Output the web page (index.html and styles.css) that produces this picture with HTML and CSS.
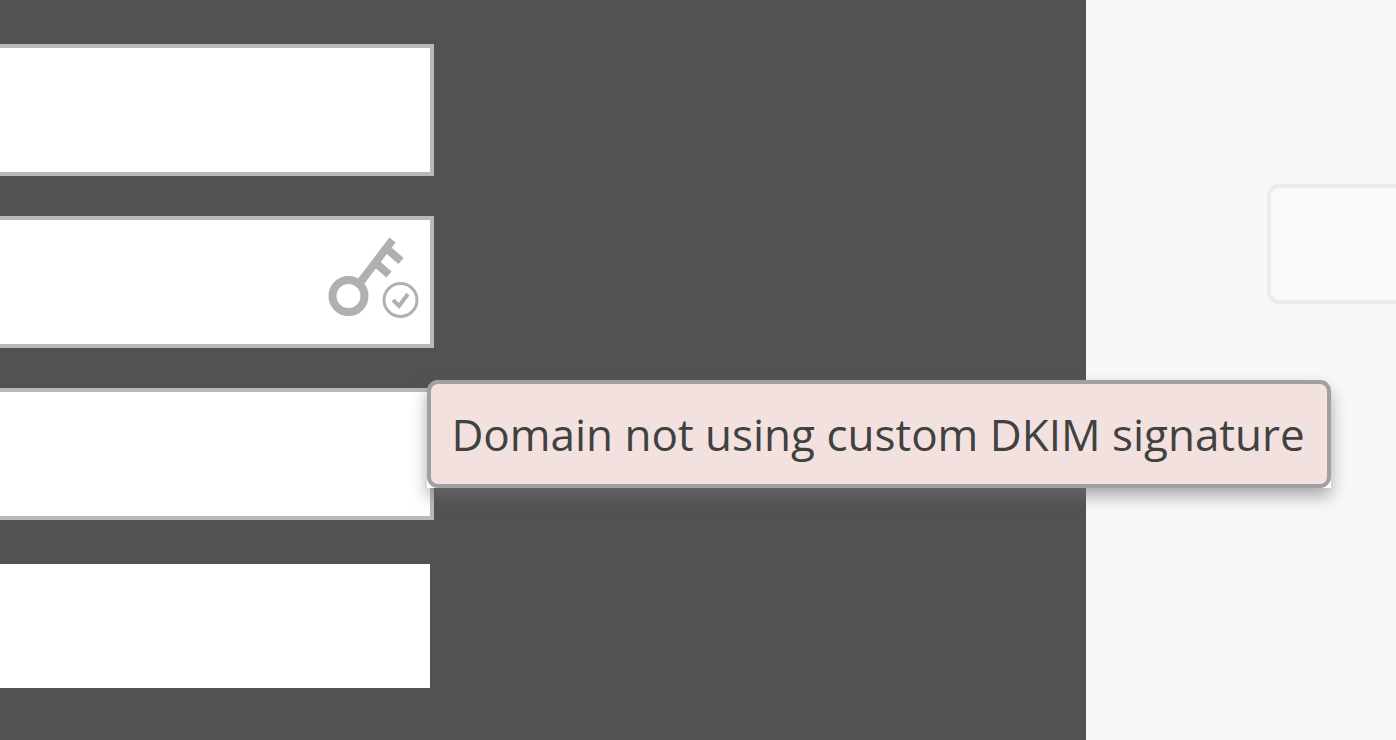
FILE: index.html
```html
<!DOCTYPE html>
<html lang="en">
<head>
<meta charset="utf-8">
<title>Domain settings</title>
<link rel="stylesheet" href="styles.css">
</head>
<body>
<div class="page">
  <main class="panel">
    <form class="fields">
      <input class="field" type="text" aria-label="Domain name">
      <div class="field-group">
        <input class="field" type="text" aria-label="DKIM signature" aria-describedby="dkim-tip">
        <svg class="key-icon" viewBox="0 0 92 84" aria-hidden="true">
          <g fill="none" stroke="#b0b0b0">
            <circle cx="21.500" cy="60" r="16" stroke-width="8"/>
            <path d="M32 48 65.500 4M59 12l15 13M47 25.500l15 13" stroke-width="8"/>
            <circle cx="73.500" cy="64" r="16.500" stroke-width="3"/>
            <path d="M66 64l6 6 9-12" stroke-width="4"/>
          </g>
        </svg>
      </div>
      <div class="field-group">
        <input class="field" type="text" aria-label="Return path">
        <div class="tooltip" id="dkim-tip" role="tooltip">
          <div class="tooltip-body">Domain not using custom DKIM signature</div>
        </div>
      </div>
      <input class="field field-plain" type="text" aria-label="Tracking domain">
    </form>
  </main>
  <aside class="side">
    <button class="side-button" type="button" aria-label="Options"></button>
  </aside>
</div>
</body>
</html>
```
FILE: styles.css
```css
* {
  box-sizing: border-box;
}

body {
  margin: 0;
  background: #f8f8f8;
  font-family: "Open Sans", "Noto Sans", sans-serif;
  overflow: hidden;
}

.page {
  display: flex;
  min-height: 100vh;
}

.panel {
  flex: 1;
  padding: 44px 0;
  background: #525252;
}

.fields {
  display: flex;
  flex-direction: column;
  gap: 40px;
  width: 40%;
}

.field-group {
  position: relative;
}

.field {
  display: block;
  width: 100%;
  height: 132px;
  padding: 0 120px 0 24px;
  border: 4px solid #b9b9b9;
  border-left: 0;
  border-radius: 0;
  background: #fff;
  font: inherit;
  font-size: 44px;
  color: #444;
}

.field-plain {
  border-color: #525252;
}

.key-icon {
  position: absolute;
  top: 20px;
  right: 15px;
  width: 92px;
  height: 84px;
}

.tooltip {
  position: absolute;
  z-index: 1;
  top: -8px;
  left: calc(100% - 7px);
  border-radius: 12px 12px 0 0;
  background: #fff;
  box-shadow: 0 8px 16px rgba(115, 115, 115, 0.6);
}

.tooltip-body {
  padding: 20px 22px 20px 20px;
  border: 4px solid #9fa09f;
  border-radius: 11px;
  background: #f3e1df;
  color: #404240;
  font-size: 44px;
  line-height: 60px;
  white-space: nowrap;
}

.side {
  display: flex;
  flex-direction: column;
  align-items: flex-end;
  width: 310px;
  padding-top: 184px;
  background: #f8f8f8;
}

.side-button {
  width: 129px;
  height: 120px;
  border: 4px solid #ebebeb;
  border-right: 0;
  border-radius: 12px 0 0 12px;
  background: #f9f9f9;
}
```
